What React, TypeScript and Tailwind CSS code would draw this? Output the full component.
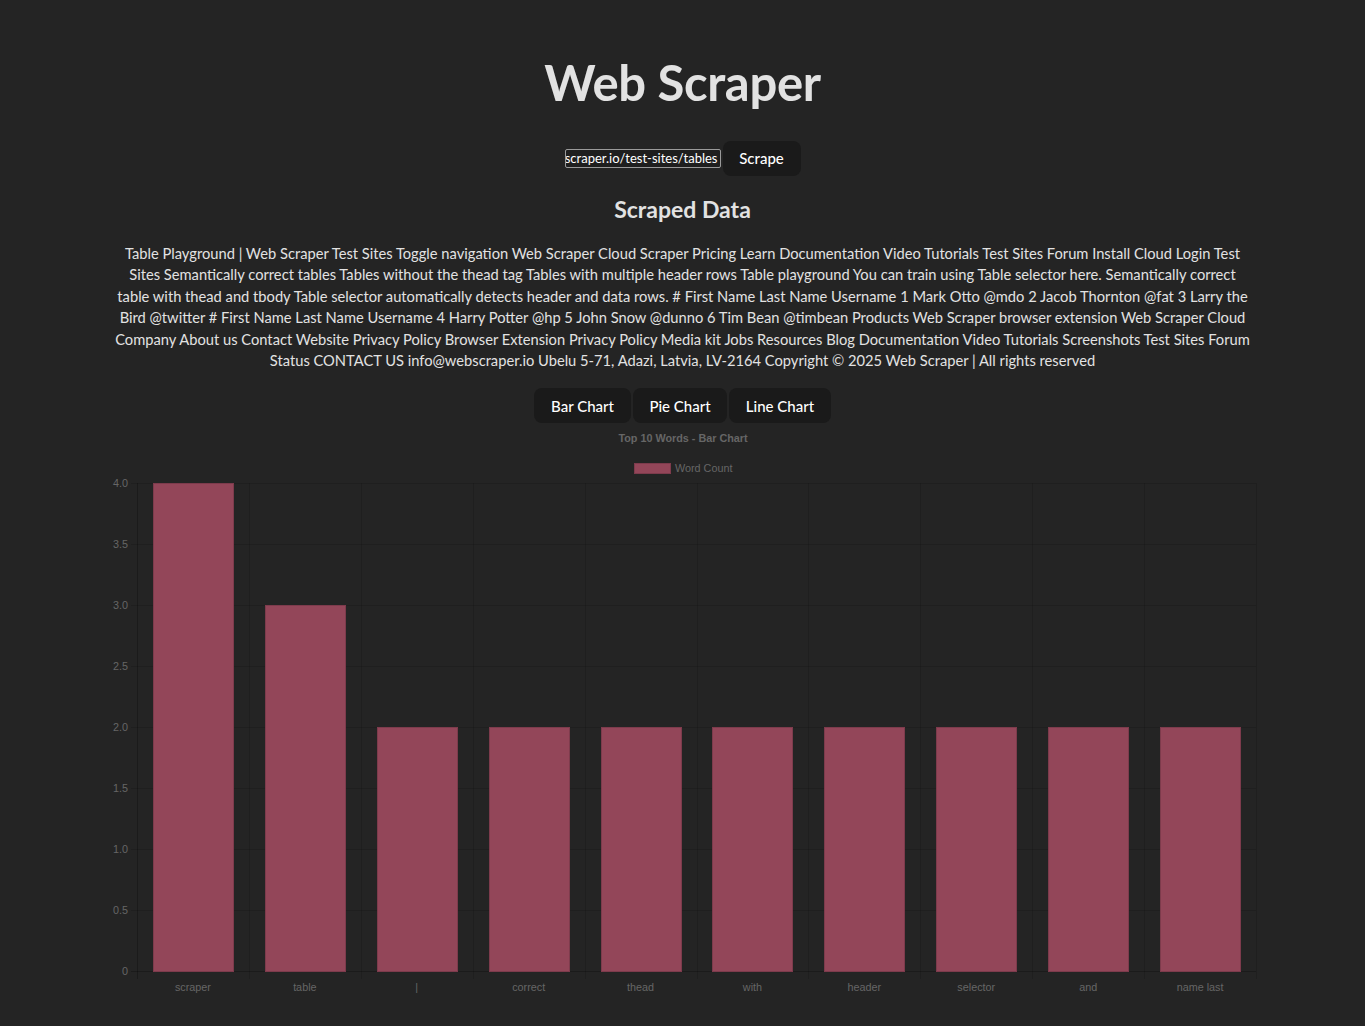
const words = [
  { label: 'scraper', value: 4 },
  { label: 'table', value: 3 },
  { label: '|', value: 2 },
  { label: 'correct', value: 2 },
  { label: 'thead', value: 2 },
  { label: 'with', value: 2 },
  { label: 'header', value: 2 },
  { label: 'selector', value: 2 },
  { label: 'and', value: 2 },
  { label: 'name last', value: 2 },
];

const lines = [
  'Table Playground | Web Scraper Test Sites Toggle navigation Web Scraper Cloud Scraper Pricing Learn Documentation Video Tutorials Test Sites Forum Install Cloud Login Test',
  'Sites Semantically correct tables Tables without the thead tag Tables with multiple header rows Table playground You can train using Table selector here. Semantically correct',
  'table with thead and tbody Table selector automatically detects header and data rows. # First Name Last Name Username 1 Mark Otto @mdo 2 Jacob Thornton @fat 3 Larry the',
  'Bird @twitter # First Name Last Name Username 4 Harry Potter @hp 5 John Snow @dunno 6 Tim Bean @timbean Products Web Scraper browser extension Web Scraper Cloud',
  'Company About us Contact Website Privacy Policy Browser Extension Privacy Policy Media kit Jobs Resources Blog Documentation Video Tutorials Screenshots Test Sites Forum',
  'Status CONTACT US info@webscraper.io Ubelu 5-71, Adazi, Latvia, LV-2164 Copyright © 2025 Web Scraper | All rights reserved',
];

// chart geometry (page coordinates)
const left = 137;
const right = 1256;
const top = 483;
const bottom = 971;
const step = (right - left) / 10;
const unit = (bottom - top) / 4;
const ticks = [0, 0.5, 1, 1.5, 2, 2.5, 3, 3.5, 4];

const BarChart: React.FC = () => (
  <svg width="1365" height="590" viewBox="0 423 1365 590" className="block" style={{ fontFamily: '"Liberation Sans", Arial, sans-serif' }}>
    <text x="683" y="442" textAnchor="middle" fontSize="10.8" fontWeight="bold" fill="#666">
      Top 10 Words - Bar Chart
    </text>
    <rect x="634.5" y="463.5" width="36" height="10" fill="#934659" stroke="#7d3b4c" />
    <text x="675" y="472" fontSize="10.8" fill="#666">
      Word Count
    </text>

    {ticks.map((t) => {
      const y = bottom - t * unit;
      return (
        <g key={t}>
          <line x1={131} x2={right} y1={y + 0.5} y2={y + 0.5} stroke={t === 0 ? 'rgba(0,0,0,0.25)' : 'rgba(0,0,0,0.12)'} />
          <text x="128" y={y + 4} textAnchor="end" fontSize="10.8" fill="#666">
            {t === 0 ? '0' : t.toFixed(1)}
          </text>
        </g>
      );
    })}
    {Array.from({ length: 11 }).map((_, k) => {
      const x = Math.round(left + k * step) + 0.5;
      return <line key={k} x1={x} x2={x} y1={top} y2={979} stroke={k === 0 ? 'rgba(0,0,0,0.25)' : 'rgba(0,0,0,0.12)'} />;
    })}

    {words.map((w, i) => {
      const cx = left + step * (i + 0.5);
      const h = w.value * unit;
      return (
        <g key={w.label}>
          <rect x={Math.round(cx - 40) + 0.5} y={bottom - h + 0.5} width="80" height={h} fill="#934659" stroke="#7d3b4c" />
          <text x={cx} y="991" textAnchor="middle" fontSize="10.8" fill="#666">
            {w.label}
          </text>
        </g>
      );
    })}
  </svg>
);

export default function App() {
  return (
    <div className="min-h-screen bg-[#242424] text-[#e2e2e2] font-['Lato','Open_Sans',sans-serif] overflow-hidden">
      <div className="flex flex-col items-center pt-[54px]">
        <h1 className="text-[49px] leading-[56px] font-bold tracking-[-0.3px]">Web Scraper</h1>

        <div className="mt-[31px] flex items-center gap-[2px]">
          <div className="w-[156px] h-[19px] flex justify-end items-center overflow-hidden whitespace-nowrap border border-[#9a9a9a] rounded-[2px] bg-[#1e1e1e] px-[2px] text-[13px] text-white">
            https://webscraper.io/test-sites/tables
          </div>
          <button className="w-[78px] h-[35px] rounded-lg bg-[#1a1a1a] text-[15px] font-medium text-white">Scrape</button>
        </div>

        <h2 className="mt-[19px] text-[23px] leading-[28px] font-bold">Scraped Data</h2>

        <div className="mt-[20px] text-center text-[14.7px] leading-[21.4px]">
          {lines.map((l) => (
            <div key={l} className="whitespace-nowrap">
              {l}
            </div>
          ))}
        </div>

        <div className="mt-[17px] flex gap-[2px]">
          <button className="w-[97px] h-[35px] rounded-lg bg-[#1a1a1a] text-[15px] font-medium text-white">Bar Chart</button>
          <button className="w-[94px] h-[35px] rounded-lg bg-[#1a1a1a] text-[15px] font-medium text-white">Pie Chart</button>
          <button className="w-[102px] h-[35px] rounded-lg bg-[#1a1a1a] text-[15px] font-medium text-white">Line Chart</button>
        </div>

        <BarChart />
      </div>
    </div>
  );
}
